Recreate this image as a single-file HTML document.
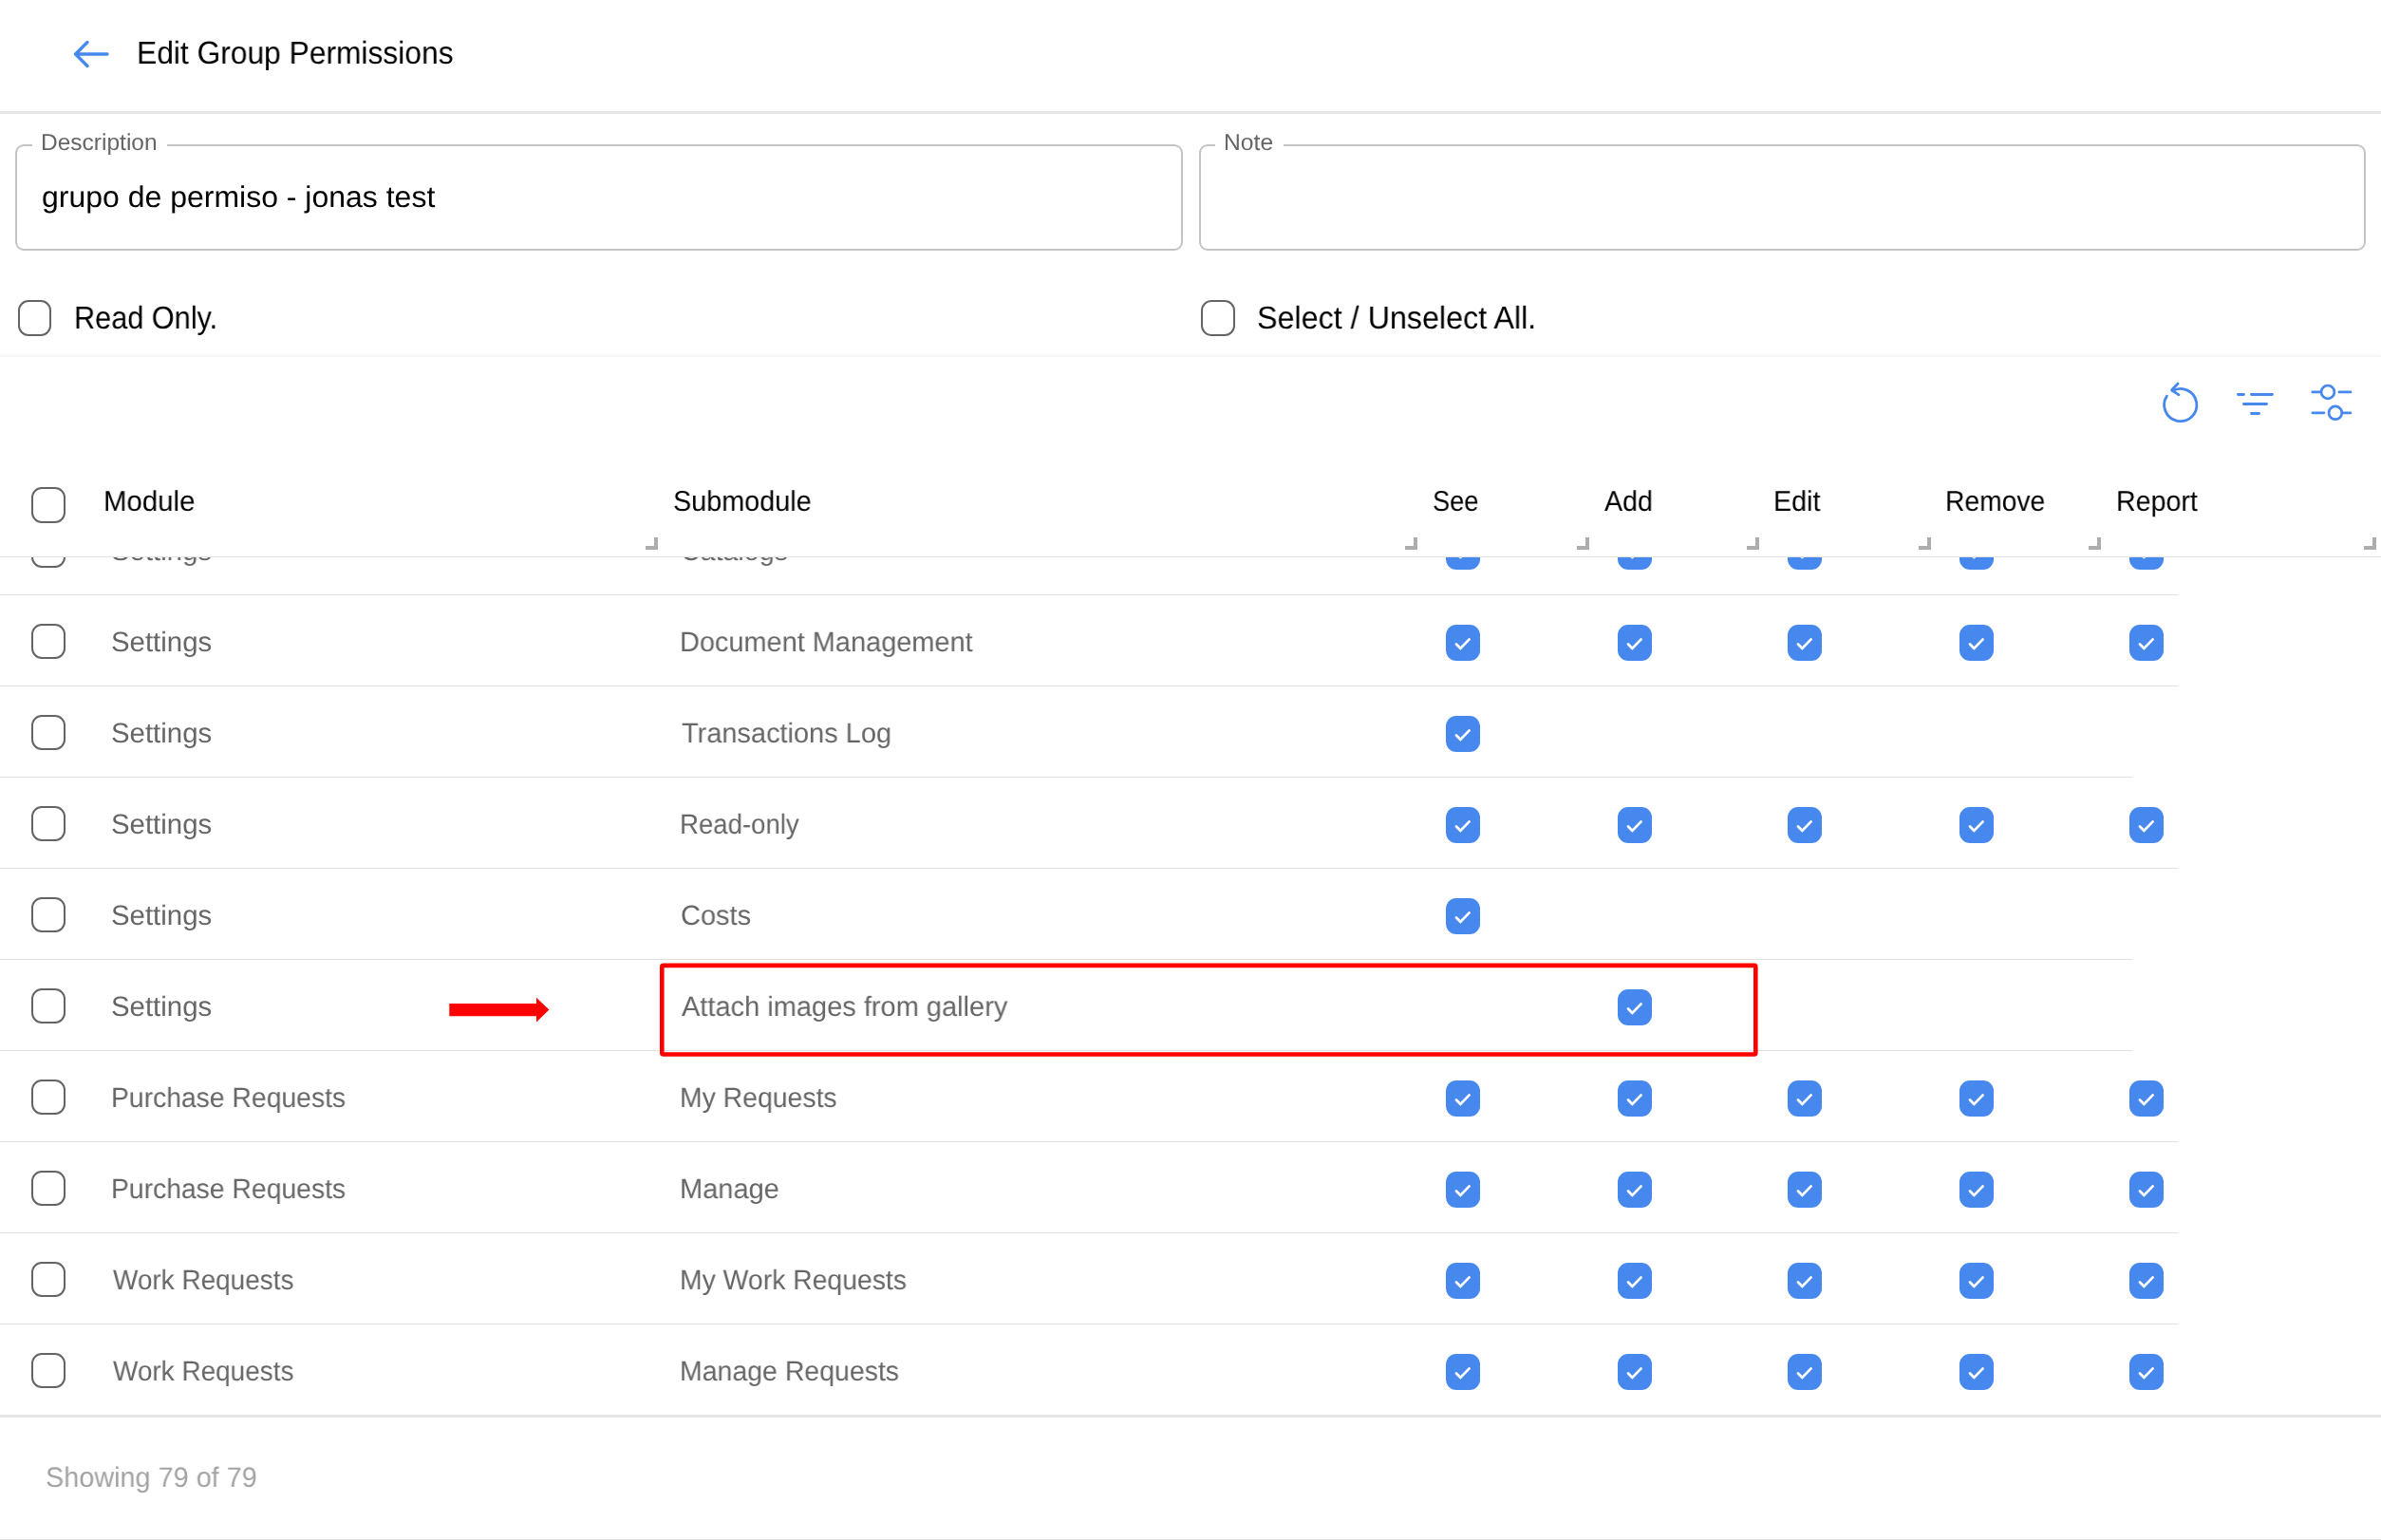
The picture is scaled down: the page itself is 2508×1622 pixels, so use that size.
<!DOCTYPE html>
<html><head><meta charset="utf-8"><title>Edit Group Permissions</title>
<style>
html,body{margin:0;padding:0;background:#fff;}
body{width:2508px;height:1622px;position:relative;overflow:hidden;font-family:"Liberation Sans",sans-serif;}
.t{position:absolute;white-space:nowrap;transform-origin:0 0;will-change:transform;text-rendering:geometricPrecision;}
.cb{position:absolute;box-sizing:border-box;}
.cb.off{width:35.8px;height:37.7px;border:2px solid #646464;border-radius:11px;background:#fff;}
.cb.on{width:36px;height:38.2px;border-radius:11px;background:#4788ee;}
.cb.on svg{display:block}
.hl{position:absolute;left:0;height:1px;background:#e0e0e0;}
.mk{position:absolute;width:13px;height:13px;}
.mk:before{content:"";position:absolute;right:0;top:0;width:4px;height:13px;background:#adadad;}
.mk:after{content:"";position:absolute;left:0;bottom:0;width:13px;height:4px;background:#adadad;}
</style></head><body>

<div style="position:absolute;left:0;top:0;width:2508px;height:117px;background:#fff"></div>
<svg style="position:absolute;left:74px;top:40px" width="44" height="34" viewBox="74 40 44 34"><path d="M113 57 L79.5 57 M92 44.5 L79.5 57 L92 69.5" fill="none" stroke="#4788ee" stroke-width="3.4" stroke-linecap="round" stroke-linejoin="round"/></svg>
<div style="position:absolute;left:0;top:117px;width:2508px;height:3px;background:#e6e6e6"></div>
<div style="position:absolute;left:16px;top:152px;width:1230px;height:112px;box-sizing:border-box;border:2px solid #c4c4c4;border-radius:9px"></div>
<div style="position:absolute;left:34px;top:148px;width:142px;height:8px;background:#fff"></div>
<div style="position:absolute;left:1263px;top:152px;width:1229px;height:112px;box-sizing:border-box;border:2px solid #c4c4c4;border-radius:9px"></div>
<div style="position:absolute;left:1280px;top:148px;width:72px;height:8px;background:#fff"></div>
<div class="cb off" style="left:18.5px;top:316px"></div>
<div class="cb off" style="left:1265px;top:316px"></div>
<div style="position:absolute;left:0;top:372px;width:2508px;height:4px;background:linear-gradient(#fff,#f4f4f4)"></div>
<svg style="position:absolute;z-index:5;left:2270px;top:395px" width="60" height="60" viewBox="-26.6 -31.6 60 60"><path d="M-14.2 -9.3 A17.1 17.1 0 1 0 -8.3 -14.9" fill="none" stroke="#4788ee" stroke-width="2.8" stroke-linecap="round"/><path d="M-2.5 -22.6 L-9 -15.8 L-1.6 -10.8" fill="none" stroke="#4788ee" stroke-width="2.8" stroke-linecap="round" stroke-linejoin="round"/></svg>
<svg style="position:absolute;z-index:5;left:2345px;top:400px" width="60" height="50" viewBox="2345 400 60 50"><path d="M2357.5 415.5 H2363.5 M2371.5 415.5 H2393.5 M2363.4 425.5 H2387.5 M2371.5 435.5 H2379.5" fill="none" stroke="#4788ee" stroke-width="2.9" stroke-linecap="round"/></svg>
<svg style="position:absolute;z-index:5;left:2425px;top:395px" width="60" height="60" viewBox="2425 395 60 60"><path d="M2435.8 412.9 H2444.6 M2463.9 412.9 H2476 M2435.8 434.8 H2448 M2467.5 434.8 H2476" fill="none" stroke="#4788ee" stroke-width="2.7" stroke-linecap="round"/><circle cx="2452" cy="412.9" r="6.9" fill="none" stroke="#4788ee" stroke-width="2.7"/><circle cx="2459.9" cy="434.8" r="6.9" fill="none" stroke="#4788ee" stroke-width="2.7"/></svg>
<div class="cb off" style="left:33.3px;top:560.7px"></div>
<span class="t" style="left:116.60px;top:565.71px;font-size:29.4px;line-height:29.4px;color:#666;transform:scaleX(0.9981);transform-origin:0 24.89px">Settings</span>
<span class="t" style="left:717.03px;top:565.71px;font-size:29.4px;line-height:29.4px;color:#666;transform:scaleX(0.9737);transform-origin:0 24.89px">Catalogs</span>
<div class="cb on" style="left:1523px;top:562px"><svg width="36" height="38" viewBox="0 0 36 38"><path d="M11 20.6 L15.4 24.9 L24.6 15.4" fill="none" stroke="#fff" stroke-width="2.8" stroke-linecap="round" stroke-linejoin="round"/></svg></div>
<div class="cb on" style="left:1703.5px;top:562px"><svg width="36" height="38" viewBox="0 0 36 38"><path d="M11 20.6 L15.4 24.9 L24.6 15.4" fill="none" stroke="#fff" stroke-width="2.8" stroke-linecap="round" stroke-linejoin="round"/></svg></div>
<div class="cb on" style="left:1883px;top:562px"><svg width="36" height="38" viewBox="0 0 36 38"><path d="M11 20.6 L15.4 24.9 L24.6 15.4" fill="none" stroke="#fff" stroke-width="2.8" stroke-linecap="round" stroke-linejoin="round"/></svg></div>
<div class="cb on" style="left:2063.5px;top:562px"><svg width="36" height="38" viewBox="0 0 36 38"><path d="M11 20.6 L15.4 24.9 L24.6 15.4" fill="none" stroke="#fff" stroke-width="2.8" stroke-linecap="round" stroke-linejoin="round"/></svg></div>
<div class="cb on" style="left:2243px;top:562px"><svg width="36" height="38" viewBox="0 0 36 38"><path d="M11 20.6 L15.4 24.9 L24.6 15.4" fill="none" stroke="#fff" stroke-width="2.8" stroke-linecap="round" stroke-linejoin="round"/></svg></div>
<div class="hl" style="top:626px;width:2294px"></div>
<div class="cb off" style="left:33.3px;top:656.7px"></div>
<span class="t" style="left:116.60px;top:661.71px;font-size:29.4px;line-height:29.4px;color:#666;transform:scaleX(0.9981);transform-origin:0 24.89px">Settings</span>
<span class="t" style="left:716.03px;top:661.71px;font-size:29.4px;line-height:29.4px;color:#666;transform:scaleX(0.9840);transform-origin:0 24.89px">Document Management</span>
<div class="cb on" style="left:1523px;top:658px"><svg width="36" height="38" viewBox="0 0 36 38"><path d="M11 20.6 L15.4 24.9 L24.6 15.4" fill="none" stroke="#fff" stroke-width="2.8" stroke-linecap="round" stroke-linejoin="round"/></svg></div>
<div class="cb on" style="left:1703.5px;top:658px"><svg width="36" height="38" viewBox="0 0 36 38"><path d="M11 20.6 L15.4 24.9 L24.6 15.4" fill="none" stroke="#fff" stroke-width="2.8" stroke-linecap="round" stroke-linejoin="round"/></svg></div>
<div class="cb on" style="left:1883px;top:658px"><svg width="36" height="38" viewBox="0 0 36 38"><path d="M11 20.6 L15.4 24.9 L24.6 15.4" fill="none" stroke="#fff" stroke-width="2.8" stroke-linecap="round" stroke-linejoin="round"/></svg></div>
<div class="cb on" style="left:2063.5px;top:658px"><svg width="36" height="38" viewBox="0 0 36 38"><path d="M11 20.6 L15.4 24.9 L24.6 15.4" fill="none" stroke="#fff" stroke-width="2.8" stroke-linecap="round" stroke-linejoin="round"/></svg></div>
<div class="cb on" style="left:2243px;top:658px"><svg width="36" height="38" viewBox="0 0 36 38"><path d="M11 20.6 L15.4 24.9 L24.6 15.4" fill="none" stroke="#fff" stroke-width="2.8" stroke-linecap="round" stroke-linejoin="round"/></svg></div>
<div class="hl" style="top:722px;width:2294px"></div>
<div class="cb off" style="left:33.3px;top:752.7px"></div>
<span class="t" style="left:116.60px;top:757.71px;font-size:29.4px;line-height:29.4px;color:#666;transform:scaleX(0.9981);transform-origin:0 24.89px">Settings</span>
<span class="t" style="left:718.00px;top:757.71px;font-size:29.4px;line-height:29.4px;color:#666;transform:scaleX(0.9852);transform-origin:0 24.89px">Transactions Log</span>
<div class="cb on" style="left:1523px;top:754px"><svg width="36" height="38" viewBox="0 0 36 38"><path d="M11 20.6 L15.4 24.9 L24.6 15.4" fill="none" stroke="#fff" stroke-width="2.8" stroke-linecap="round" stroke-linejoin="round"/></svg></div>
<div class="hl" style="top:818px;width:2246px"></div>
<div class="cb off" style="left:33.3px;top:848.7px"></div>
<span class="t" style="left:116.60px;top:853.71px;font-size:29.4px;line-height:29.4px;color:#666;transform:scaleX(0.9981);transform-origin:0 24.89px">Settings</span>
<span class="t" style="left:716.12px;top:853.71px;font-size:29.4px;line-height:29.4px;color:#666;transform:scaleX(0.9379);transform-origin:0 24.89px">Read-only</span>
<div class="cb on" style="left:1523px;top:850px"><svg width="36" height="38" viewBox="0 0 36 38"><path d="M11 20.6 L15.4 24.9 L24.6 15.4" fill="none" stroke="#fff" stroke-width="2.8" stroke-linecap="round" stroke-linejoin="round"/></svg></div>
<div class="cb on" style="left:1703.5px;top:850px"><svg width="36" height="38" viewBox="0 0 36 38"><path d="M11 20.6 L15.4 24.9 L24.6 15.4" fill="none" stroke="#fff" stroke-width="2.8" stroke-linecap="round" stroke-linejoin="round"/></svg></div>
<div class="cb on" style="left:1883px;top:850px"><svg width="36" height="38" viewBox="0 0 36 38"><path d="M11 20.6 L15.4 24.9 L24.6 15.4" fill="none" stroke="#fff" stroke-width="2.8" stroke-linecap="round" stroke-linejoin="round"/></svg></div>
<div class="cb on" style="left:2063.5px;top:850px"><svg width="36" height="38" viewBox="0 0 36 38"><path d="M11 20.6 L15.4 24.9 L24.6 15.4" fill="none" stroke="#fff" stroke-width="2.8" stroke-linecap="round" stroke-linejoin="round"/></svg></div>
<div class="cb on" style="left:2243px;top:850px"><svg width="36" height="38" viewBox="0 0 36 38"><path d="M11 20.6 L15.4 24.9 L24.6 15.4" fill="none" stroke="#fff" stroke-width="2.8" stroke-linecap="round" stroke-linejoin="round"/></svg></div>
<div class="hl" style="top:914px;width:2294px"></div>
<div class="cb off" style="left:33.3px;top:944.7px"></div>
<span class="t" style="left:116.60px;top:949.71px;font-size:29.4px;line-height:29.4px;color:#666;transform:scaleX(0.9981);transform-origin:0 24.89px">Settings</span>
<span class="t" style="left:717.01px;top:949.71px;font-size:29.4px;line-height:29.4px;color:#666;transform:scaleX(0.9863);transform-origin:0 24.89px">Costs</span>
<div class="cb on" style="left:1523px;top:946px"><svg width="36" height="38" viewBox="0 0 36 38"><path d="M11 20.6 L15.4 24.9 L24.6 15.4" fill="none" stroke="#fff" stroke-width="2.8" stroke-linecap="round" stroke-linejoin="round"/></svg></div>
<div class="hl" style="top:1010px;width:2246px"></div>
<div class="cb off" style="left:33.3px;top:1040.7px"></div>
<span class="t" style="left:116.60px;top:1045.71px;font-size:29.4px;line-height:29.4px;color:#666;transform:scaleX(0.9981);transform-origin:0 24.89px">Settings</span>
<span class="t" style="left:718.00px;top:1045.71px;font-size:29.4px;line-height:29.4px;color:#666;transform:scaleX(0.9868);transform-origin:0 24.89px">Attach images from gallery</span>
<div class="cb on" style="left:1703.5px;top:1042px"><svg width="36" height="38" viewBox="0 0 36 38"><path d="M11 20.6 L15.4 24.9 L24.6 15.4" fill="none" stroke="#fff" stroke-width="2.8" stroke-linecap="round" stroke-linejoin="round"/></svg></div>
<div class="hl" style="top:1106px;width:2246px"></div>
<div class="cb off" style="left:33.3px;top:1136.7px"></div>
<span class="t" style="left:116.67px;top:1141.71px;font-size:29.4px;line-height:29.4px;color:#666;transform:scaleX(0.9634);transform-origin:0 24.89px">Purchase Requests</span>
<span class="t" style="left:716.07px;top:1141.71px;font-size:29.4px;line-height:29.4px;color:#666;transform:scaleX(0.9657);transform-origin:0 24.89px">My Requests</span>
<div class="cb on" style="left:1523px;top:1138px"><svg width="36" height="38" viewBox="0 0 36 38"><path d="M11 20.6 L15.4 24.9 L24.6 15.4" fill="none" stroke="#fff" stroke-width="2.8" stroke-linecap="round" stroke-linejoin="round"/></svg></div>
<div class="cb on" style="left:1703.5px;top:1138px"><svg width="36" height="38" viewBox="0 0 36 38"><path d="M11 20.6 L15.4 24.9 L24.6 15.4" fill="none" stroke="#fff" stroke-width="2.8" stroke-linecap="round" stroke-linejoin="round"/></svg></div>
<div class="cb on" style="left:1883px;top:1138px"><svg width="36" height="38" viewBox="0 0 36 38"><path d="M11 20.6 L15.4 24.9 L24.6 15.4" fill="none" stroke="#fff" stroke-width="2.8" stroke-linecap="round" stroke-linejoin="round"/></svg></div>
<div class="cb on" style="left:2063.5px;top:1138px"><svg width="36" height="38" viewBox="0 0 36 38"><path d="M11 20.6 L15.4 24.9 L24.6 15.4" fill="none" stroke="#fff" stroke-width="2.8" stroke-linecap="round" stroke-linejoin="round"/></svg></div>
<div class="cb on" style="left:2243px;top:1138px"><svg width="36" height="38" viewBox="0 0 36 38"><path d="M11 20.6 L15.4 24.9 L24.6 15.4" fill="none" stroke="#fff" stroke-width="2.8" stroke-linecap="round" stroke-linejoin="round"/></svg></div>
<div class="hl" style="top:1202px;width:2294px"></div>
<div class="cb off" style="left:33.3px;top:1232.7px"></div>
<span class="t" style="left:116.67px;top:1237.71px;font-size:29.4px;line-height:29.4px;color:#666;transform:scaleX(0.9634);transform-origin:0 24.89px">Purchase Requests</span>
<span class="t" style="left:716.03px;top:1237.71px;font-size:29.4px;line-height:29.4px;color:#666;transform:scaleX(0.9874);transform-origin:0 24.89px">Manage</span>
<div class="cb on" style="left:1523px;top:1234px"><svg width="36" height="38" viewBox="0 0 36 38"><path d="M11 20.6 L15.4 24.9 L24.6 15.4" fill="none" stroke="#fff" stroke-width="2.8" stroke-linecap="round" stroke-linejoin="round"/></svg></div>
<div class="cb on" style="left:1703.5px;top:1234px"><svg width="36" height="38" viewBox="0 0 36 38"><path d="M11 20.6 L15.4 24.9 L24.6 15.4" fill="none" stroke="#fff" stroke-width="2.8" stroke-linecap="round" stroke-linejoin="round"/></svg></div>
<div class="cb on" style="left:1883px;top:1234px"><svg width="36" height="38" viewBox="0 0 36 38"><path d="M11 20.6 L15.4 24.9 L24.6 15.4" fill="none" stroke="#fff" stroke-width="2.8" stroke-linecap="round" stroke-linejoin="round"/></svg></div>
<div class="cb on" style="left:2063.5px;top:1234px"><svg width="36" height="38" viewBox="0 0 36 38"><path d="M11 20.6 L15.4 24.9 L24.6 15.4" fill="none" stroke="#fff" stroke-width="2.8" stroke-linecap="round" stroke-linejoin="round"/></svg></div>
<div class="cb on" style="left:2243px;top:1234px"><svg width="36" height="38" viewBox="0 0 36 38"><path d="M11 20.6 L15.4 24.9 L24.6 15.4" fill="none" stroke="#fff" stroke-width="2.8" stroke-linecap="round" stroke-linejoin="round"/></svg></div>
<div class="hl" style="top:1298px;width:2294px"></div>
<div class="cb off" style="left:33.3px;top:1328.7px"></div>
<span class="t" style="left:118.60px;top:1333.71px;font-size:29.4px;line-height:29.4px;color:#666;transform:scaleX(0.9505);transform-origin:0 24.89px">Work Requests</span>
<span class="t" style="left:716.07px;top:1333.71px;font-size:29.4px;line-height:29.4px;color:#666;transform:scaleX(0.9649);transform-origin:0 24.89px">My Work Requests</span>
<div class="cb on" style="left:1523px;top:1330px"><svg width="36" height="38" viewBox="0 0 36 38"><path d="M11 20.6 L15.4 24.9 L24.6 15.4" fill="none" stroke="#fff" stroke-width="2.8" stroke-linecap="round" stroke-linejoin="round"/></svg></div>
<div class="cb on" style="left:1703.5px;top:1330px"><svg width="36" height="38" viewBox="0 0 36 38"><path d="M11 20.6 L15.4 24.9 L24.6 15.4" fill="none" stroke="#fff" stroke-width="2.8" stroke-linecap="round" stroke-linejoin="round"/></svg></div>
<div class="cb on" style="left:1883px;top:1330px"><svg width="36" height="38" viewBox="0 0 36 38"><path d="M11 20.6 L15.4 24.9 L24.6 15.4" fill="none" stroke="#fff" stroke-width="2.8" stroke-linecap="round" stroke-linejoin="round"/></svg></div>
<div class="cb on" style="left:2063.5px;top:1330px"><svg width="36" height="38" viewBox="0 0 36 38"><path d="M11 20.6 L15.4 24.9 L24.6 15.4" fill="none" stroke="#fff" stroke-width="2.8" stroke-linecap="round" stroke-linejoin="round"/></svg></div>
<div class="cb on" style="left:2243px;top:1330px"><svg width="36" height="38" viewBox="0 0 36 38"><path d="M11 20.6 L15.4 24.9 L24.6 15.4" fill="none" stroke="#fff" stroke-width="2.8" stroke-linecap="round" stroke-linejoin="round"/></svg></div>
<div class="hl" style="top:1394px;width:2294px"></div>
<div class="cb off" style="left:33.3px;top:1424.7px"></div>
<span class="t" style="left:118.60px;top:1429.71px;font-size:29.4px;line-height:29.4px;color:#666;transform:scaleX(0.9505);transform-origin:0 24.89px">Work Requests</span>
<span class="t" style="left:716.06px;top:1429.71px;font-size:29.4px;line-height:29.4px;color:#666;transform:scaleX(0.9686);transform-origin:0 24.89px">Manage Requests</span>
<div class="cb on" style="left:1523px;top:1426px"><svg width="36" height="38" viewBox="0 0 36 38"><path d="M11 20.6 L15.4 24.9 L24.6 15.4" fill="none" stroke="#fff" stroke-width="2.8" stroke-linecap="round" stroke-linejoin="round"/></svg></div>
<div class="cb on" style="left:1703.5px;top:1426px"><svg width="36" height="38" viewBox="0 0 36 38"><path d="M11 20.6 L15.4 24.9 L24.6 15.4" fill="none" stroke="#fff" stroke-width="2.8" stroke-linecap="round" stroke-linejoin="round"/></svg></div>
<div class="cb on" style="left:1883px;top:1426px"><svg width="36" height="38" viewBox="0 0 36 38"><path d="M11 20.6 L15.4 24.9 L24.6 15.4" fill="none" stroke="#fff" stroke-width="2.8" stroke-linecap="round" stroke-linejoin="round"/></svg></div>
<div class="cb on" style="left:2063.5px;top:1426px"><svg width="36" height="38" viewBox="0 0 36 38"><path d="M11 20.6 L15.4 24.9 L24.6 15.4" fill="none" stroke="#fff" stroke-width="2.8" stroke-linecap="round" stroke-linejoin="round"/></svg></div>
<div class="cb on" style="left:2243px;top:1426px"><svg width="36" height="38" viewBox="0 0 36 38"><path d="M11 20.6 L15.4 24.9 L24.6 15.4" fill="none" stroke="#fff" stroke-width="2.8" stroke-linecap="round" stroke-linejoin="round"/></svg></div>
<div class="hl" style="top:1490px;width:2294px"></div>
<svg style="position:absolute;left:690px;top:1010px" width="1170" height="110" viewBox="690 1010 1170 110"><rect x="697.3" y="1016.9" width="1152" height="93.6" rx="1.5" fill="none" stroke="#ff0000" stroke-width="4.6"/></svg>
<svg style="position:absolute;left:470px;top:1045px" width="115" height="36" viewBox="470 1045 115 36"><path d="M473.3 1057.1 H565 V1050.8 L578.4 1063.6 L565 1076.6 V1070.2 H473.3 Z" fill="#ff0000"/></svg>
<div style="position:absolute;left:0;top:376px;width:2508px;height:210px;background:#fff"></div>
<div style="position:absolute;left:0;top:586px;width:2508px;height:1px;background:#e3e3e3"></div>
<div class="cb off" style="left:33.3px;top:513px"></div>
<span class="t" style="left:108.95px;top:513.91px;font-size:30.1px;line-height:30.1px;color:#000;transform:scaleX(0.9771);transform-origin:0 25.49px">Module</span>
<span class="t" style="left:709.44px;top:513.91px;font-size:30.1px;line-height:30.1px;color:#000;transform:scaleX(0.9573);transform-origin:0 25.49px">Submodule</span>
<span class="t" style="left:1509.49px;top:513.91px;font-size:30.1px;line-height:30.1px;color:#000;transform:scaleX(0.9059);transform-origin:0 25.49px">See</span>
<span class="t" style="left:1690.20px;top:513.91px;font-size:30.1px;line-height:30.1px;color:#000;transform:scaleX(0.9519);transform-origin:0 25.49px">Add</span>
<span class="t" style="left:1868.39px;top:513.91px;font-size:30.1px;line-height:30.1px;color:#000;transform:scaleX(0.9540);transform-origin:0 25.49px">Edit</span>
<span class="t" style="left:2048.52px;top:513.91px;font-size:30.1px;line-height:30.1px;color:#000;transform:scaleX(0.9394);transform-origin:0 25.49px">Remove</span>
<span class="t" style="left:2228.70px;top:513.91px;font-size:30.1px;line-height:30.1px;color:#000;transform:scaleX(0.9500);transform-origin:0 25.49px">Report</span>
<div class="mk" style="left:680px;top:566px"></div>
<div class="mk" style="left:1480px;top:566px"></div>
<div class="mk" style="left:1661px;top:566px"></div>
<div class="mk" style="left:1840px;top:566px"></div>
<div class="mk" style="left:2020.5px;top:566px"></div>
<div class="mk" style="left:2199.5px;top:566px"></div>
<div class="mk" style="left:2489.5px;top:566px"></div>
<div style="position:absolute;left:0;top:1490px;width:2508px;height:3px;background:#e6e6e6"></div>
<div style="position:absolute;left:0;top:1493px;width:2508px;height:128px;background:#fff"></div>
<span class="t" style="left:47.73px;top:1541.54px;font-size:29.6px;line-height:29.6px;color:#a3a3a3;transform:scaleX(0.9740);transform-origin:0 25.06px">Showing 79 of 79</span>
<div style="position:absolute;left:0;top:1621px;width:2508px;height:1px;background:#e6e6e6"></div>
<span class="t" style="left:144.11px;top:39.95px;font-size:33.6px;line-height:33.6px;color:#000;transform:scaleX(0.9457);transform-origin:0 28.45px">Edit Group Permissions</span>
<span class="t" style="left:42.99px;top:138.74px;font-size:24.4px;line-height:24.4px;color:#666;transform:scaleX(1.0050);transform-origin:0 20.66px">Description</span>
<span class="t" style="left:1289.38px;top:138.74px;font-size:24.4px;line-height:24.4px;color:#666;transform:scaleX(1.0122);transform-origin:0 20.66px">Note</span>
<span class="t" style="left:43.98px;top:192.41px;font-size:31.4px;line-height:31.4px;color:#000;transform:scaleX(1.0190);transform-origin:0 26.59px">grupo de permiso - jonas test</span>
<span class="t" style="left:77.96px;top:318.52px;font-size:33.4px;line-height:33.4px;color:#000;transform:scaleX(0.9187);transform-origin:0 28.28px">Read Only.</span>
<span class="t" style="left:1323.77px;top:318.52px;font-size:33.4px;line-height:33.4px;color:#000;transform:scaleX(0.9667);transform-origin:0 28.28px">Select / Unselect All.</span>
</body></html>
